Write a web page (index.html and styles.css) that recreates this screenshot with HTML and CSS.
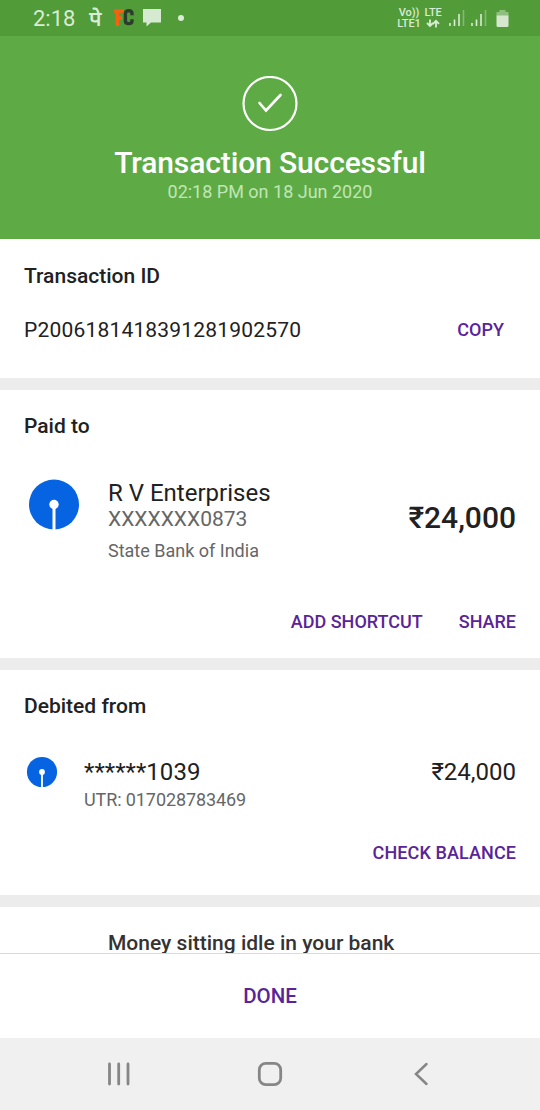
FILE: index.html
```html
<!DOCTYPE html>
<html lang="en">
<head>
<meta charset="utf-8">
<title>Transaction Successful</title>
<link rel="stylesheet" href="styles.css">
</head>
<body>
<div class="screen">
  <header class="status">
    <div class="status-left">
      <span class="clock">2:18</span>
      <span class="pe">पे</span>
      <svg class="fc" width="23" height="20" viewBox="0 0 23 20">
        <path d="M2 3H12M5.200 3V18M5 10H10" fill="none" stroke="#f5610c" stroke-width="3.600"/>
        <path d="M20 7.200V5.600Q20 2.800 16.800 2.800Q13.400 2.800 13.400 5.600V12.900Q13.400 15.600 16.800 15.600Q20 15.600 20 12.900V11.200" fill="none" stroke="#2c3d2c" stroke-width="3.400"/>
      </svg>
      <svg class="bubble" width="20" height="20" viewBox="0 0 20 20"><path d="M1 1H19V14.500H9L4.500 18.500V14.500H1Z" fill="#d5ead0"/></svg>
      <span class="dot"></span>
    </div>
    <div class="status-right">
      <div class="net"><span>Vo))</span><span>LTE1</span></div>
      <div class="net data"><span>LTE</span>
        <svg width="14" height="9" viewBox="0 0 14 9"><path d="M4 .5V7M1 4L4 7L7 4M10 8.500V2M7 4.800L10 1.800L13 4.800" fill="none" stroke="#d9ecd4" stroke-width="1.800"/></svg>
      </div>
      <svg class="signal" width="16" height="18" viewBox="0 0 16 18"><path d="M1 14V17M5.500 10.500V17M10 5V17" stroke="#d9ecd4" stroke-width="1.600"/><path d="M14.500 1V17" stroke="#83b973" stroke-width="1.600"/></svg>
      <svg class="signal" width="16" height="18" viewBox="0 0 16 18"><path d="M1 14V17M5.500 10.500V17M10 5V17" stroke="#d9ecd4" stroke-width="1.600"/><path d="M14.500 1V17" stroke="#83b973" stroke-width="1.600"/></svg>
      <svg class="battery" width="13" height="19" viewBox="0 0 13 19"><path d="M3.500 1H9.500V3H12.500V7H.5V3H3.500Z" fill="#8fc080"/><path d="M.5 6.500H12.500V16.500Q12.500 18 11 18H2Q.5 18 .5 16.500Z" fill="#d5e8cf"/></svg>
    </div>
  </header>

  <section class="hero">
    <svg width="56" height="56" viewBox="0 0 56 56" fill="none" stroke="#fff">
      <circle cx="28" cy="27.500" r="26.500" stroke-width="2.200"/>
      <path d="M17.500 27L24 34.500L38.500 19" stroke-width="2.600" stroke-linecap="round"/>
    </svg>
    <h1 class="hero-title">Transaction Successful</h1>
    <p class="hero-time">02:18 PM on 18 Jun 2020</p>
  </section>

  <main class="content">
    <section class="card card-id">
      <h2 class="heading">Transaction ID</h2>
      <div class="id-row"><span class="txn">P2006181418391281902570</span><a class="action copy">COPY</a></div>
    </section>

    <section class="card card-paid">
      <h2 class="heading">Paid to</h2>
      <div class="payee">
        <svg class="bank-lg" width="52" height="52" viewBox="0 0 52 52"><circle cx="26" cy="25.500" r="25" fill="#0664e3"/><circle cx="26" cy="25.500" r="4.700" fill="#fff"/><path d="M26 27V52" stroke="#fff" stroke-width="3"/></svg>
        <div class="payee-text">
          <span class="name">R V Enterprises</span>
          <span class="account">XXXXXXX0873</span>
          <span class="bank">State Bank of India</span>
        </div>
        <span class="amount-lg">₹24,000</span>
      </div>
      <div class="actions"><a class="action add">ADD SHORTCUT</a><a class="action share">SHARE</a></div>
    </section>

    <section class="card card-debit">
      <h2 class="heading">Debited from</h2>
      <div class="source">
        <svg class="bank-sm" width="32" height="32" viewBox="0 0 52 52"><circle cx="26" cy="26" r="24.500" fill="#0664e3"/><circle cx="26" cy="26" r="4.700" fill="#fff"/><path d="M26 27V52" stroke="#fff" stroke-width="3"/></svg>
        <div class="source-text">
          <span class="masked">******1039</span>
          <span class="utr">UTR: 017028783469</span>
        </div>
        <span class="amount">₹24,000</span>
      </div>
      <div class="actions"><a class="action check">CHECK BALANCE</a></div>
    </section>

    <section class="card promo"><p class="promo-text">Money sitting idle in your bank</p></section>
  </main>

  <footer class="footer"><a class="done">DONE</a></footer>

  <nav class="nav">
    <svg width="24" height="24" viewBox="0 0 24 24"><path d="M2.500 2V22M11.700 2V22M21 2V22" stroke="#868686" stroke-width="2.800" stroke-linecap="round"/></svg>
    <svg width="26" height="26" viewBox="0 0 26 26"><rect x="2.300" y="2.300" width="21.400" height="21.400" rx="6.500" fill="none" stroke="#868686" stroke-width="2.800"/></svg>
    <svg width="24" height="24" viewBox="0 0 24 24"><path d="M17.500 2L7 12L17.500 22" fill="none" stroke="#868686" stroke-width="2.500" stroke-linecap="round"/></svg>
  </nav>
</div>
</body>
</html>
```
FILE: styles.css
```css
* { box-sizing: border-box; }
body, h1, h2, p { margin: 0; }
body { font-family: Roboto, "Noto Sans", sans-serif; color: #212121; background: #fff; }
svg { display: block; flex: none; }

.screen { display: flex; flex-direction: column; width: 540px; height: 1110px; overflow: hidden; }

.status { display: flex; justify-content: space-between; height: 36px; padding: 0 31px 0 32px; background: #529b39; color: #d9ecd4; }
.status-left, .status-right { display: flex; align-items: center; }
.clock { width: 57px; padding-left: 1px; font-size: 22px; line-height: 38px; padding-top: 1px; }
.pe { width: 23px; font: 600 21px/36px "Noto Sans", sans-serif; }
.bubble { margin-left: 7px; }
.dot { width: 6px; height: 6px; margin-left: 16px; border-radius: 50%; background: #d9ecd4; }
.net { display: flex; flex-direction: column; align-items: center; width: 24px; font-size: 11px; font-weight: 500; line-height: 10px; letter-spacing: -0.1px; }
.net span { padding-top: 0.5px; }
.data { width: 20px; margin-left: 2px; }
.data svg { margin-top: 1px; }
.signal { margin-left: 6px; }
.battery { margin-left: 9px; }

.hero { display: flex; flex-direction: column; align-items: center; height: 203px; padding-top: 40px; background: #5eab46; color: #fff; }
.hero-title { margin-top: 13px; font-size: 30px; font-weight: 500; line-height: 36px; letter-spacing: -0.12px; }
.hero-time { font-size: 18px; line-height: 21px; color: #c0e6b5; }

.content { flex: 1; min-height: 0; overflow: hidden; }
.card { padding: 0 24px; border-bottom: 12px solid #ececec; }
.heading { font-size: 21px; font-weight: 500; line-height: 24px; }
.action { font-size: 18px; font-weight: 500; line-height: 24px; color: #5a2499; }

.card-id { height: 151px; padding-top: 25px; }
.id-row { display: flex; justify-content: space-between; align-items: center; margin-top: 30px; padding-right: 12px; }
.txn { font-size: 21px; line-height: 24px; letter-spacing: 0.19px; }

.card-paid { height: 280px; padding-top: 24px; }
.payee { display: flex; margin-top: 41px; }
.bank-lg { margin: 0 28px 0 4px; }
.payee-text { display: flex; flex-direction: column; flex: 1; }
.name { font-size: 24px; line-height: 28px; }
.account { font-size: 21px; line-height: 25px; color: #666; }
.bank { margin-top: 8px; font-size: 18px; line-height: 22px; color: #666; }
.amount-lg { margin-top: 21px; font-size: 30px; font-weight: 500; line-height: 36px; }
.actions { display: flex; justify-content: flex-end; gap: 36px; }
.card-paid .actions { margin-top: 48px; }

.card-debit { height: 237px; padding-top: 24px; }
.source { display: flex; margin-top: 38px; }
.bank-sm { margin: 0 26px 0 2px; }
.source-text { display: flex; flex-direction: column; flex: 1; margin-top: 2px; }
.masked { font-size: 24px; line-height: 28px; letter-spacing: 0.05px; }
.utr { margin-top: 3px; font-size: 18px; line-height: 22px; letter-spacing: -0.1px; color: #666; }
.amount { margin-top: 2px; font-size: 24px; line-height: 28px; }
.card-debit .actions { margin-top: 30px; }
.check { letter-spacing: 0.1px; }

.promo { height: 100px; padding: 24px 24px 0 108px; border-bottom: 0; }
.promo-text { font-size: 21px; font-weight: 500; line-height: 24px; color: #333; white-space: nowrap; }

.footer { flex: none; height: 85px; border-top: 1px solid #dadada; text-align: center; background: #fff; }
.done { font-size: 20.5px; font-weight: 500; line-height: 84px; color: #5a2499; }

.nav { display: flex; flex: none; justify-content: space-between; align-items: center; height: 72px; padding: 0 107px; background: #f0f0f0; }
```
